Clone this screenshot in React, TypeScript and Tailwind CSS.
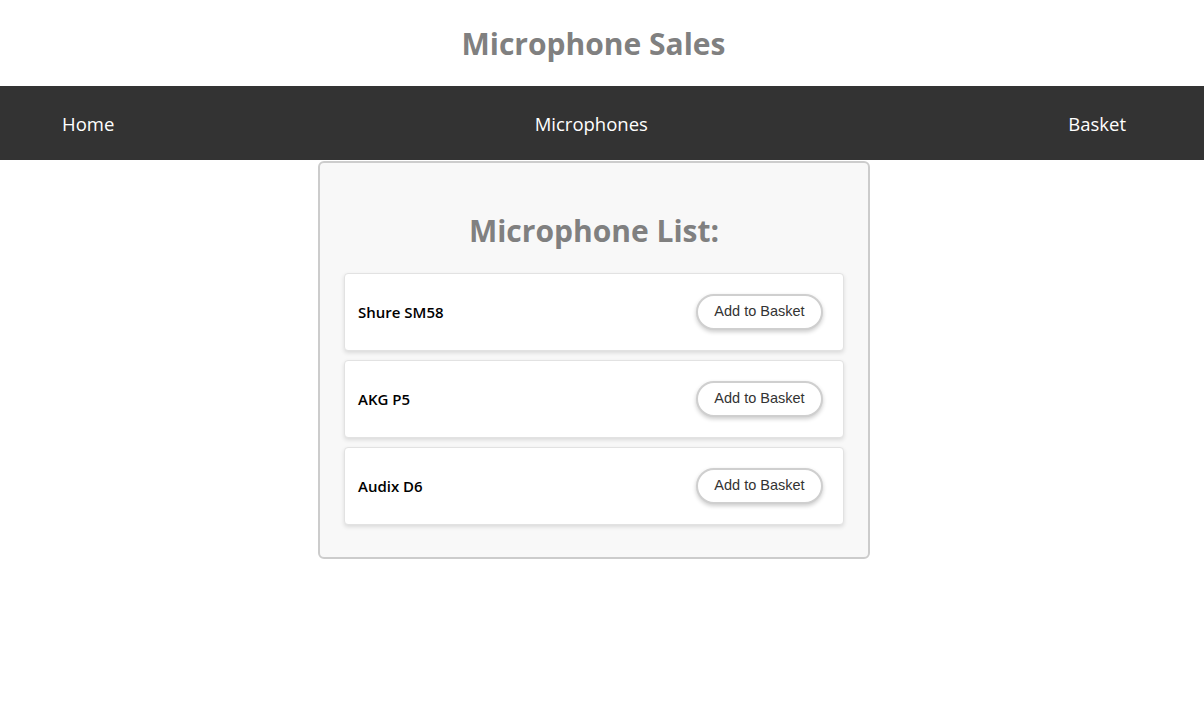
const microphones = ["Shure SM58", "AKG P5", "Audix D6"];

const font = { fontFamily: '"Open Sans", "Noto Sans", sans-serif' };

const App = () => {
    return (
        <div className="min-h-screen bg-white" style={font}>
            <header className="h-[86px] flex items-center justify-center pr-[17px]">
                <h1 className="text-[30px] font-bold text-[#808080]">Microphone Sales</h1>
            </header>

            <nav className="h-[74px] bg-[#333333] flex items-center justify-between pl-[62px] pr-[78px] pt-px text-white text-[18.5px]">
                <a className="cursor-pointer">Home</a>
                <a className="cursor-pointer">Microphones</a>
                <a className="cursor-pointer">Basket</a>
            </nav>

            <main className="flex justify-center pt-px pr-[16px]">
                <div className="w-[552px] bg-[#f8f8f8] border-2 border-[#cccccc] rounded-md px-6 pt-[48px] pb-8">
                    <h2 className="text-center text-[30px] font-bold text-[#808080] leading-[40px] mb-[22px]">
                        Microphone List:
                    </h2>
                    <ul className="flex flex-col gap-[9px]">
                        {microphones.map((name) => (
                            <li
                                key={name}
                                className="h-[78px] bg-white border border-[#e2e2e2] rounded-[4px] shadow-[0_2px_4px_rgba(0,0,0,0.12)] flex items-center justify-between pl-[13px] pr-5"
                            >
                                <span className="text-[15px] font-semibold text-black">{name}</span>
                                <button
                                    className="w-[127px] h-[36px] rounded-full border-2 border-[#cfcfcf] bg-white text-[14.5px] text-[#333] shadow-[0_2px_4px_rgba(0,0,0,0.2)]"
                                    style={{ fontFamily: '"Liberation Sans", Arial, sans-serif' }}
                                >
                                    Add to Basket
                                </button>
                            </li>
                        ))}
                    </ul>
                </div>
            </main>
        </div>
    );
};

export default App;
